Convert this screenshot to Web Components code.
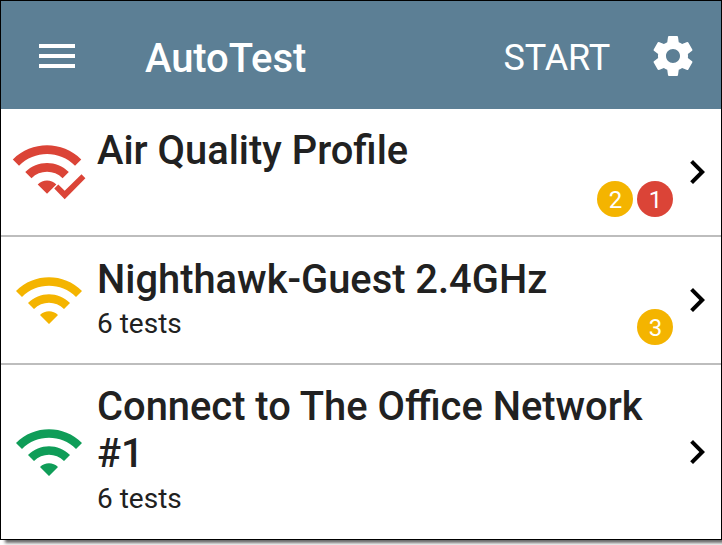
<!DOCTYPE html>
<html lang="en">
<head>
<meta charset="utf-8">
<title>AutoTest</title>
<style>
    html {
        background: #fff;
        overflow: hidden;
    }

    body {
        margin: 0;
        height: 545px;
        font-family: Roboto, "Liberation Sans", sans-serif;
        color: #212121;
    }
</style>
</head>
<body>
<app-frame>
    <app-bar slot="bar" heading="AutoTest">START</app-bar>
    <profile-row status="failed" heading="Air Quality Profile">
        <count-badge slot="badges" level="warning">2</count-badge>
        <count-badge slot="badges" level="failed">1</count-badge>
    </profile-row>
    <profile-row status="warning" heading="Nighthawk-Guest 2.4GHz">
        6 tests
        <count-badge slot="badges" level="warning">3</count-badge>
    </profile-row>
    <profile-row status="passed" heading="Connect to The Office Network #1">6 tests</profile-row>
</app-frame>

<script>
const COLORS = {
    failed: '#db4437',
    warning: '#f4b400',
    passed: '#0f9d58'
};

// All glyphs use a 24 unit grid
const ICONS = {
    menu: 'M3 18h18v-2H3v2zm0-5h18v-2H3v2zm0-7v2h18V6H3z',
    settings: 'M19.43 12.98c.04-.32.07-.64.07-.98s-.03-.66-.07-.98l2.11-1.65c.19-.15.24-.42.12-.64l-2-3.46c-.12-.22-.39-.3-.61-.22l-2.49 1c-.52-.4-1.08-.73-1.69-.98l-.38-2.65C14.46 2.18 14.25 2 14 2h-4c-.25 0-.46.18-.49.42l-.38 2.65c-.61.25-1.17.59-1.69.98l-2.49-1c-.23-.09-.49 0-.61.22l-2 3.46c-.13.22-.07.49.12.64l2.11 1.65c-.04.32-.07.65-.07.98s.03.66.07.98l-2.11 1.65c-.19.15-.24.42-.12.64l2 3.46c.12.22.39.3.61.22l2.49-1c.52.4 1.08.73 1.69.98l.38 2.65c.03.24.24.42.49.42h4c.25 0 .46-.18.49-.42l.38-2.65c.61-.25 1.17-.59 1.69-.98l2.49 1c.23.09.49 0 .61-.22l2-3.46c.12-.22.07-.49-.12-.64l-2.11-1.65zM12 15.5c-1.93 0-3.5-1.57-3.5-3.5s1.57-3.5 3.5-3.5 3.5 1.57 3.5 3.5-1.57 3.5-3.5 3.5z',
    chevron: 'M10 6L8.59 7.41 13.17 12l-4.58 4.59L10 18l6-6z',
    wifi: 'M1 9l2 2c4.97-4.97 13.03-4.97 18 0l2-2C16.93 2.93 7.08 2.93 1 9zm8 8l3 3 3-3c-1.65-1.66-4.34-1.66-6 0zm-4-4l2 2c2.76-2.76 7.24-2.76 10 0l2-2C15.14 9.14 8.87 9.14 5 13z',
    tick: 'M13.75 17.5l1.35-1.35 2.13 2.1 5.6-5.5 1.3 1.3-6.9 7z'
};

class AppIcon extends HTMLElement {
    constructor() {
        super();
        this.attachShadow({ mode: 'open' });
    }

    connectedCallback() {
        let name = this.getAttribute('name');
        let shape = `<path d="${ICONS[name]}"/>`;
        if (name === 'wifi-check') {
            // bigger arcs, with a tick laid over the lower right
            shape = `
                <g transform="translate(-1.1 -1.5) scale(1.037)"><path d="${ICONS.wifi}"/></g>
                <path d="${ICONS.tick}" stroke="#fff" stroke-width=".6"/>
                <path d="${ICONS.tick}"/>
            `;
        }
        this.shadowRoot.innerHTML = `
            <style>
                :host {
                    display: block;
                    flex: none;
                    width: 48px;
                    height: 48px;
                }

                svg {
                    display: block;
                    width: 100%;
                    height: 100%;
                    fill: currentColor;
                    overflow: visible;
                }
            </style>
            <svg viewBox="0 0 24 24">${shape}</svg>
        `;
    }
}

class CountBadge extends HTMLElement {
    constructor() {
        super();
        this.attachShadow({ mode: 'open' });
    }

    connectedCallback() {
        this.shadowRoot.innerHTML = `
            <style>
                :host {
                    display: flex;
                    justify-content: center;
                    box-sizing: border-box;
                    width: 36px;
                    height: 36px;
                    padding: 1px 0 0 1px;
                    border-radius: 50%;
                    background: ${COLORS[this.getAttribute('level')]};
                    color: #fff;
                    font-size: 24px;
                    line-height: 36px;
                }
            </style>
            <span><slot></slot></span>
        `;
    }
}

class AppBar extends HTMLElement {
    constructor() {
        super();
        this.attachShadow({ mode: 'open' });
    }

    connectedCallback() {
        this.shadowRoot.innerHTML = `
            <style>
                :host {
                    display: flex;
                    align-items: flex-start;
                    box-sizing: border-box;
                    height: 108px;
                    padding: 31px 24px 0 32px;
                    background: #5c7f95;
                    color: #fff;
                }

                h1 {
                    flex: 1;
                    margin: 3px 0 0 64px;
                    font-size: 40px;
                    font-weight: 500;
                    line-height: 47px;
                    letter-spacing: -.1px;
                }

                .action {
                    margin: 5px 39px 0 0;
                    font-size: 36px;
                    line-height: 42px;
                    letter-spacing: -.15px;
                }
            </style>
            <app-icon name="menu"></app-icon>
            <h1>${this.getAttribute('heading')}</h1>
            <div class="action"><slot></slot></div>
            <app-icon name="settings"></app-icon>
        `;
    }
}

class ProfileRow extends HTMLElement {
    constructor() {
        super();
        this.attachShadow({ mode: 'open' });
    }

    connectedCallback() {
        let status = this.getAttribute('status');
        this.shadowRoot.innerHTML = `
            <style>
                :host {
                    display: flex;
                    box-sizing: border-box;
                    min-height: 128px;
                    padding-left: 12px;
                    border-bottom: 2px solid #bdbdbd;
                }

                :host(:last-of-type) {
                    flex: 1;
                    border-bottom: 0;
                }

                :host([status="warning"]) h2 {
                    margin: 1px 0 4px;
                }

                app-icon {
                    align-self: center;
                }

                .status {
                    width: 72px;
                    height: 72px;
                    color: ${COLORS[status]};
                }

                .text {
                    flex: 1;
                    padding: 18px 0 0 12px;
                }

                h2 {
                    margin: 0 0 5px;
                    font-size: 39.86px;
                    font-weight: 500;
                    line-height: 47px;
                }

                .detail {
                    font-size: 28px;
                    line-height: 33px;
                }

                .badges {
                    display: flex;
                    gap: 4px;
                    align-self: flex-end;
                    padding-bottom: 18px;
                }

                .chevron {
                    color: #000;
                }
            </style>
            <app-icon class="status" name="${status === 'failed' ? 'wifi-check' : 'wifi'}"></app-icon>
            <div class="text">
                <h2>${this.getAttribute('heading')}</h2>
                <div class="detail"><slot></slot></div>
            </div>
            <div class="badges"><slot name="badges"></slot></div>
            <app-icon class="chevron" name="chevron"></app-icon>
        `;
    }
}

class AppFrame extends HTMLElement {
    constructor() {
        super();
        this.attachShadow({ mode: 'open' });
    }

    connectedCallback() {
        this.shadowRoot.innerHTML = `
            <style>
                :host {
                    display: flex;
                    flex-direction: column;
                    box-sizing: border-box;
                    width: 722px;
                    height: 540px;
                    border: 1px solid #000;
                    background: #fff;
                    box-shadow: 5px 3px 3px rgba(0, 0, 0, .6);
                }
            </style>
            <slot name="bar"></slot>
            <slot></slot>
        `;
    }
}

customElements.define('app-icon', AppIcon);
customElements.define('count-badge', CountBadge);
customElements.define('app-bar', AppBar);
customElements.define('profile-row', ProfileRow);
customElements.define('app-frame', AppFrame);
</script>
</body>
</html>
